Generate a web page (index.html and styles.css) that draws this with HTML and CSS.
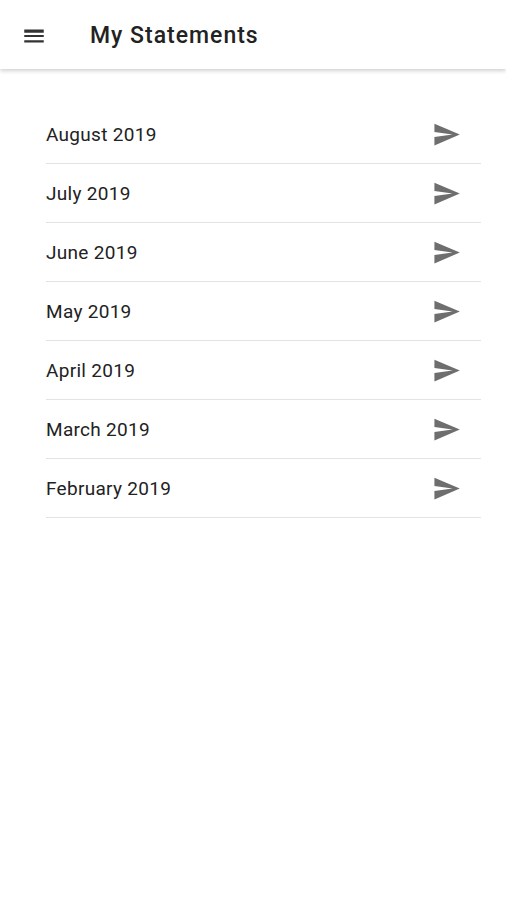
FILE: index.html
```html
<!DOCTYPE html>
<html lang="en">
<head>
    <meta charset="utf-8">
    <meta name="viewport" content="width=device-width, initial-scale=1.0">
    <title>My Statements</title>
    <link rel="stylesheet" href="styles.css">
</head>
<body>
    <header class="app-bar">
        <button class="menu-button" aria-label="Menu">
            <svg viewBox="0 0 24 24" width="26" height="26"><path d="M3 18h18v-2H3v2zm0-5h18v-2H3v2zm0-6v2h18V6H3z"/></svg>
        </button>
        <h1 class="title">My Statements</h1>
    </header>

    <ul class="statement-list">
        <li class="statement"><span>August 2019</span><svg class="send" viewBox="0 0 24 24"><path d="M2.01 21L23 12 2.01 3 2 10l15 2-15 2z"/></svg></li>
        <li class="statement"><span>July 2019</span><svg class="send" viewBox="0 0 24 24"><path d="M2.01 21L23 12 2.01 3 2 10l15 2-15 2z"/></svg></li>
        <li class="statement"><span>June 2019</span><svg class="send" viewBox="0 0 24 24"><path d="M2.01 21L23 12 2.01 3 2 10l15 2-15 2z"/></svg></li>
        <li class="statement"><span>May 2019</span><svg class="send" viewBox="0 0 24 24"><path d="M2.01 21L23 12 2.01 3 2 10l15 2-15 2z"/></svg></li>
        <li class="statement"><span>April 2019</span><svg class="send" viewBox="0 0 24 24"><path d="M2.01 21L23 12 2.01 3 2 10l15 2-15 2z"/></svg></li>
        <li class="statement"><span>March 2019</span><svg class="send" viewBox="0 0 24 24"><path d="M2.01 21L23 12 2.01 3 2 10l15 2-15 2z"/></svg></li>
        <li class="statement"><span>February 2019</span><svg class="send" viewBox="0 0 24 24"><path d="M2.01 21L23 12 2.01 3 2 10l15 2-15 2z"/></svg></li>
    </ul>
</body>
</html>
```

FILE: styles.css
```css
body {
    margin: 0;
    background-color: #ffffff;
    font-family: Roboto, "Liberation Sans", sans-serif;
    color: #222222;
}
.app-bar {
    display: flex;
    align-items: center;
    height: 69px;
    background-color: #ffffff;
    box-shadow: 0 2px 4px rgba(0, 0, 0, 0.18);
}
.menu-button {
    display: flex;
    border: none;
    background: none;
    padding: 0;
    margin-left: 21px;
    margin-top: 2px;
    fill: #333333;
}
.title {
    margin: 2px 0 0 43px;
    font-size: 23px;
    font-weight: 500;
    letter-spacing: 1px;
    color: #222222;
}
.statement-list {
    list-style: none;
    margin: 36px 25px 0 46px;
    padding: 0;
}
.statement {
    display: flex;
    align-items: center;
    justify-content: space-between;
    height: 58px;
    border-bottom: 1px solid #e3e3e3;
    font-size: 19px;
    letter-spacing: 0.3px;
}
.send {
    width: 29px;
    height: 29px;
    margin-right: 20px;
    fill: #6e6e6e;
}
```
